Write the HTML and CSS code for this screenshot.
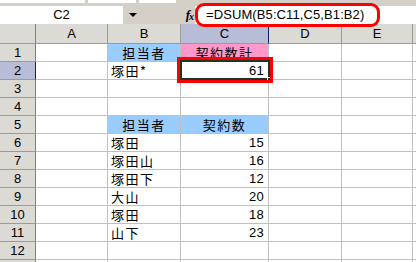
FILE: index.html
```html
<!DOCTYPE html>
<html>
<head>
<meta charset="utf-8" />
<title>DSUM</title>
<link rel="stylesheet" href="styles.css">
</head>
<body>
	<div class="toolbar-edge">
		<span class="tb tb1"></span>
		<span class="tb tb2"></span>
		<span class="tb tb3"></span>
	</div>
	<div class="formula-bar">
		<div class="name-box">C2</div>
		<div class="name-drop"><span class="arrow"></span></div>
		<div class="fx"><i>f</i><i class="x">x</i></div>
		<div class="formula">
			<span class="formula-text">=DSUM(B5:C11,C5,B1:B2)</span>
			<span class="mark-round"></span>
		</div>
	</div>
	<div class="sheet">
		<div class="hd corner"></div><div class="hd">A</div><div class="hd">B</div><div class="hd sel-col">C</div><div class="hd">D</div><div class="hd">E</div><div class="hd last"></div>

		<div class="rh">1</div><div class="c"></div><div class="c blue center">担当者</div><div class="c pink center">契約数計</div><div class="c"></div><div class="c"></div><div class="c last"></div>
		<div class="rh sel-row">2</div><div class="c"></div><div class="c">塚田*</div><div class="c num active">61<span class="handle"></span><span class="mark-box"></span></div><div class="c"></div><div class="c"></div><div class="c last"></div>
		<div class="rh">3</div><div class="c"></div><div class="c"></div><div class="c"></div><div class="c"></div><div class="c"></div><div class="c last"></div>
		<div class="rh">4</div><div class="c"></div><div class="c"></div><div class="c"></div><div class="c"></div><div class="c"></div><div class="c last"></div>
		<div class="rh">5</div><div class="c"></div><div class="c blue center">担当者</div><div class="c blue center">契約数</div><div class="c"></div><div class="c"></div><div class="c last"></div>
		<div class="rh">6</div><div class="c"></div><div class="c">塚田</div><div class="c num">15</div><div class="c"></div><div class="c"></div><div class="c last"></div>
		<div class="rh">7</div><div class="c"></div><div class="c">塚田山</div><div class="c num">16</div><div class="c"></div><div class="c"></div><div class="c last"></div>
		<div class="rh">8</div><div class="c"></div><div class="c">塚田下</div><div class="c num">12</div><div class="c"></div><div class="c"></div><div class="c last"></div>
		<div class="rh">9</div><div class="c"></div><div class="c">大山</div><div class="c num">20</div><div class="c"></div><div class="c"></div><div class="c last"></div>
		<div class="rh">10</div><div class="c"></div><div class="c">塚田</div><div class="c num">18</div><div class="c"></div><div class="c"></div><div class="c last"></div>
		<div class="rh">11</div><div class="c"></div><div class="c">山下</div><div class="c num">23</div><div class="c"></div><div class="c"></div><div class="c last"></div>
		<div class="rh">12</div><div class="c"></div><div class="c"></div><div class="c"></div><div class="c"></div><div class="c"></div><div class="c last"></div>
		<div class="rh"></div><div class="c"></div><div class="c"></div><div class="c"></div><div class="c"></div><div class="c"></div><div class="c last"></div>
	</div>
</body>
</html>
```
FILE: styles.css
```css
*{margin: 0;padding: 0;box-sizing: border-box;}
html,body{height: 100%;overflow: hidden;}
body{background-color: #fff;font-family: "Liberation Sans","Noto Sans CJK JP",sans-serif;font-size: 13px;color: #000;}

/* tool bar remains */
.toolbar-edge{height: 6px;background-color: #d4d0c8;display: flex;gap: 3px;}
.tb{display: block;height: 3px;background-color: #fff;}
.tb1{width: 85px;}
.tb2{width: 48px;}
.tb3{width: 37px;}

/* formula bar */
.formula-bar{height: 18px;background-color: #d4d0c8;display: flex;align-items: stretch;}
.name-box{width: 123px;background-color: #fff;text-align: center;line-height: 17px;}
.name-drop{width: 18px;display: flex;align-items: center;justify-content: center;}
.arrow{display: block;width: 0;height: 0;border-left: 4px solid transparent;border-right: 4px solid transparent;border-top: 4px solid #000;margin-left: 2px;}
.fx{width: 54px;display: flex;justify-content: flex-end;align-items: center;padding-right: 1px;font-family: "Liberation Serif",serif;font-size: 13px;font-weight: bold;}
.fx .x{font-size: 10px;margin-top: 3px;margin-left: -1px;}
.formula{flex: 1;background-color: #fff;position: relative;line-height: 18px;padding-left: 11px;}
.formula-text{letter-spacing: 0.1px;}
.mark-round{position: absolute;left: 0;top: -3px;width: 185px;height: 24px;border: 3px solid #f00;border-radius: 9px;}

/* sheet */
.sheet{display: grid;grid-template-columns: 36px 72px 73px 88px 73px 71px 1fr;grid-template-rows: 20px;grid-auto-rows: 18px;}
.hd{background-color: #dcdad5;border-right: 1px solid #9c9a94;border-bottom: 1px solid #9c9a94;text-align: center;line-height: 19px;}
.hd.corner{border-right-color: #808080;}
.hd.sel-col{background-color: #b7bdd6;border-right-color: #0a246a;}
.hd.last{border-right: none;}
.rh{background-color: #dcdad5;border-right: 1px solid #808080;border-bottom: 1px solid #9c9a94;text-align: center;line-height: 17px;}
.rh.sel-row{background-color: #b7bdd6;border-right-color: #0a246a;}
.c{border-right: 1px solid #c0c0c0;border-bottom: 1px solid #c0c0c0;line-height: 17px;padding: 0 3px;font-family: "Noto Sans CJK JP","Liberation Sans",sans-serif;font-size: 13px;letter-spacing: 1.5px;white-space: nowrap;overflow: hidden;}
.c.last{border-right: none;}
.c.center{text-align: center;}
.c.num{text-align: right;padding-right: 4px;font-family: "Liberation Sans",sans-serif;font-size: 13px;letter-spacing: 0.3px;}
.blue{background-color: #99ccff;}
.pink{background-color: #ff99cc;}

/* active cell and marker */
.c.active{position: relative;overflow: visible;}
.active::before{content: "";position: absolute;left: -1px;top: -2px;right: -2px;bottom: -1px;border: 2px solid #1d3524;}
.handle{position: absolute;right: -4px;bottom: -3px;width: 5px;height: 5px;background-color: #1d3524;border: 1px solid #fff;}
.mark-box{position: absolute;left: -4px;top: -5px;right: -5px;bottom: -4px;border: 3px solid #f00;}
```
